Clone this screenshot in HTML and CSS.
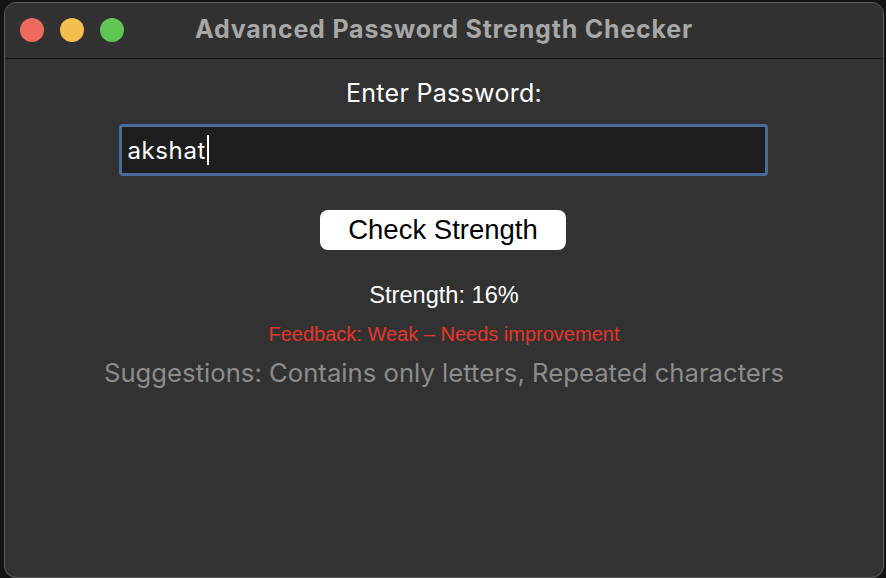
FILE: index.html
```html
<!DOCTYPE html>
<html lang="en">
<head>
<meta charset="utf-8">
<title>Advanced Password Strength Checker</title>
<link rel="stylesheet" href="styles.css">
</head>
<body>
<div class="window">
  <div class="titlebar">
    <div class="lights">
      <span class="light red"></span>
      <span class="light yellow"></span>
      <span class="light green"></span>
    </div>
    <div class="title">Advanced Password Strength Checker</div>
  </div>
  <div class="content">
    <div class="label">Enter Password:</div>
    <div class="input"><span class="value">akshat</span><span class="caret"></span></div>
    <button class="btn">Check Strength</button>
    <div class="strength">Strength: 16%</div>
    <div class="feedback">Feedback: Weak – Needs improvement</div>
    <div class="suggestions">Suggestions: Contains only letters, Repeated characters</div>
  </div>
</div>
</body>
</html>
```
FILE: styles.css
```css
html, body {
  margin: 0;
  padding: 0;
  background: #141414;
  width: 886px;
  height: 578px;
  overflow: hidden;
}
.window {
  box-sizing: border-box;
  margin: 2px 2px 0 4px;
  width: 880px;
  height: 576px;
  border: 1px solid #5e5e5e;
  border-radius: 12px;
  background: #323232;
  overflow: hidden;
  display: flex;
  flex-direction: column;
}
.titlebar {
  position: relative;
  height: 55px;
  flex: none;
  border-bottom: 1px solid #161616;
  background: #313131;
  display: flex;
  align-items: center;
  justify-content: center;
}
.lights {
  position: absolute;
  left: 15px;
  top: 15px;
  display: flex;
  gap: 16px;
}
.light {
  width: 24px;
  height: 24px;
  border-radius: 50%;
  display: block;
}
.red { background: #ee6a5f; }
.yellow { background: #f5bf4f; }
.green { background: #61c554; }
.title {
  font-family: Inter, "Liberation Sans", sans-serif;
  font-weight: 700;
  font-size: 25px;
  letter-spacing: 0.8px;
  color: #a7a7a7;
  margin-top: -4px;
}
.content {
  flex: 1;
  display: flex;
  flex-direction: column;
  align-items: center;
  padding-top: 19px;
}
.label {
  font-family: Inter, "Liberation Sans", sans-serif;
  font-size: 25px;
  letter-spacing: 0.3px;
  line-height: 28px;
  color: #ffffff;
  margin-top: 1px;
}
.input {
  box-sizing: border-box;
  margin-top: 17px;
  margin-right: 2px;
  width: 649px;
  height: 52px;
  border: 3px solid #4a6c9b;
  border-radius: 4px;
  background: #1e1e1e;
  display: flex;
  align-items: center;
  padding-left: 6px;
}
.value {
  font-family: Inter, "Liberation Sans", sans-serif;
  font-size: 24px;
  letter-spacing: 0.6px;
  color: #ffffff;
}
.caret {
  width: 2px;
  height: 30px;
  background: #ffffff;
  margin-left: 1px;
}
.btn {
  margin-top: 34px;
  width: 246px;
  height: 40px;
  border: none;
  border-radius: 8px;
  background: #ffffff;
  color: #000000;
  font-family: "Liberation Sans", Arial, sans-serif;
  font-size: 27.5px;
  padding: 0;
  margin-right: 2px;
}
.strength {
  margin-top: 32px;
  font-family: "Liberation Sans", Arial, sans-serif;
  font-size: 23.6px;
  line-height: 26px;
  color: #ffffff;
}
.feedback {
  margin-top: 14px;
  font-family: "Liberation Sans", Arial, sans-serif;
  font-size: 20px;
  line-height: 24px;
  color: #e8352a;
}
.suggestions {
  margin-top: 12px;
  font-family: Inter, "Liberation Sans", sans-serif;
  font-size: 25.7px;
  line-height: 30px;
  color: #8c8c8c;
}
```
